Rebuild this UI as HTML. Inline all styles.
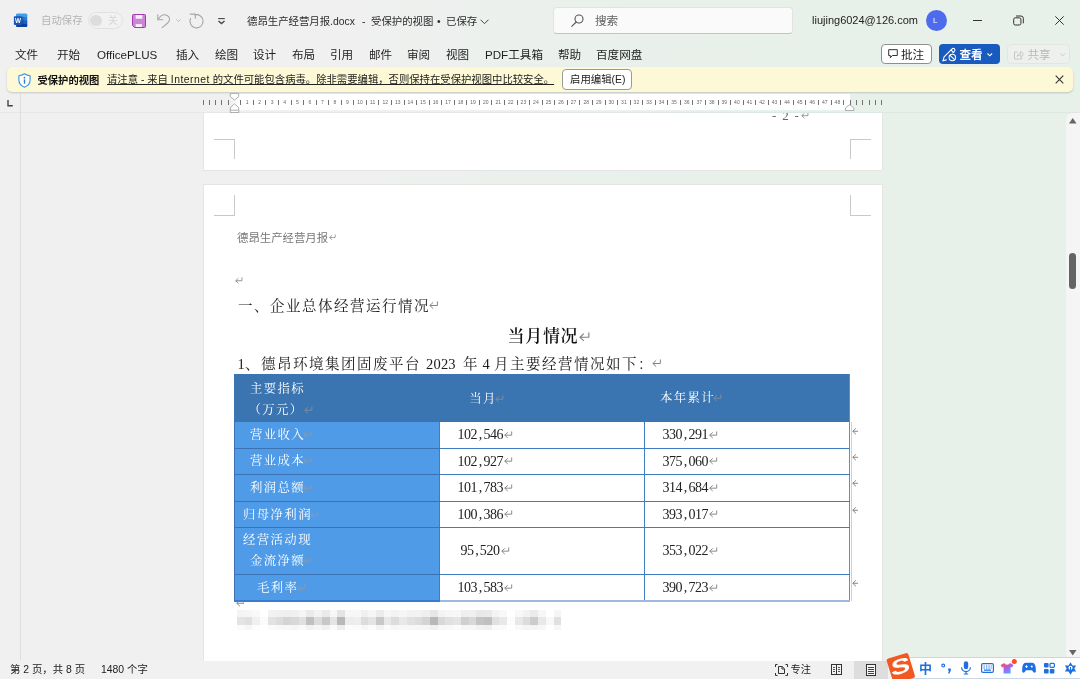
<!DOCTYPE html>
<html lang="zh-CN">
<head>
<meta charset="utf-8">
<title>德昂生产经营月报.docx</title>
<style>
*{box-sizing:border-box;margin:0;padding:0}
html,body{width:1080px;height:679px;overflow:hidden}
body{position:relative;font-family:"Liberation Sans","Noto Sans CJK SC",sans-serif;color:#222;
 background:linear-gradient(90deg,#f0f0f0 0%,#f0f0f0 30%,#e9f0eb 60%,#e8f0ea 100%);}
#root{position:absolute;left:0;top:0;width:1080px;height:679px;overflow:hidden;will-change:transform}
.abs{position:absolute}
.t{position:absolute;white-space:nowrap;line-height:1}
svg{position:absolute;overflow:visible}
/* ---------- title bar ---------- */
#titlebar{left:0;top:0;width:1080px;height:40px}
.ttl{font-size:10.4px;color:#2b2b2b;top:17px}
/* ---------- menu ---------- */
.mi{font-size:11.6px;color:#1f1f1f;top:49px}
/* ---------- message bar ---------- */
#msg{left:7px;top:67px;width:1066px;height:25px;background:#fdf8d6;border-radius:5px;box-shadow:0 1px 2px rgba(0,0,0,.18)}
/* ---------- ruler ---------- */
#rulerwhite{left:231px;top:94.3px;width:618.500px;height:16px;background:linear-gradient(90deg,rgba(255,255,255,0) 0,#fff 8px)}
/* ---------- doc ---------- */
#docarea{left:0;top:113px;width:1066px;height:548px;overflow:hidden}
#docin{left:0;top:-1px;width:1066px;height:549px}
.page{position:absolute;left:202.500px;width:680px;background:#fff;border:1px solid #e4e4e4}
.serif{font-family:"Liberation Serif","Noto Serif CJK SC",serif}
.ret{color:#8a8a8a;font-family:"DejaVu Sans",sans-serif}
/* table */
.cell{position:absolute}
.lab{color:#fff;font-size:12.4px;letter-spacing:1.4px;font-weight:400;margin-top:1.500px}
.num{color:#222;font-size:14px;letter-spacing:-.45px}
.num i{font-style:normal;padding:0 1.6px}
.l1{font-size:14.5px;letter-spacing:1.500px;color:#1c1c1c;font-weight:400;margin-top:1.200px}
.dg{letter-spacing:0.2px}
svg.r{position:static;display:inline-block;width:.62em;height:.55em;fill:none;stroke:#808080;stroke-width:1.100;vertical-align:0.02em;margin-left:.5px;letter-spacing:0}
.lab svg.r{width:8.400px;height:7.500px;margin-left:-1.800px}
.num svg.r{width:8.200px;height:7.400px;margin-left:1.300px;vertical-align:1px}
.l1 svg.r{margin-left:-1px;vertical-align:2px}
svg.rh{stroke:#7d8b9f;stroke-width:1.2}
svg.rl{stroke:#8c98a8;stroke-width:1.2}
/* status bar */
#status{left:0;top:661px;width:1080px;height:18px;background:#f1f1f1}
</style>
</head>
<body>
<div id="root">

<!-- ================= TITLE BAR ================= -->
<div id="titlebar" class="abs">
  <!-- word icon -->
  <svg style="left:13px;top:13px" width="16" height="16" viewBox="0 0 16 16">
    <rect x="3.200" y="0.700" width="11" height="13.300" rx="1" fill="#2b7cd3"/>
    <path d="M3.200 1.700a1 1 0 0 1 1-1h9a1 1 0 0 1 1 1v2.300h-11z" fill="#3fa0ea"/>
    <rect x="3.200" y="7.500" width="11" height="3.500" fill="#1a5fc2"/>
    <path d="M3.200 11h11v2a1 1 0 0 1-1 1h-9a1 1 0 0 1-1-1z" fill="#0f3f99"/>
    <rect x="9.200" y="3.600" width="1.200" height="9" fill="#0b2f78" opacity=".35"/>
    <rect x="0.900" y="3.200" width="8.300" height="8.700" rx="1" fill="#1756b8"/>
    <text x="5.050" y="10" font-size="6.300" font-weight="bold" fill="#fff" text-anchor="middle" font-family="Liberation Sans, sans-serif">W</text>
  </svg>
  <div class="t" style="left:41px;top:16px;font-size:10.4px;color:#b4b4b4">自动保存</div>
  <div class="abs" style="left:88px;top:12px;width:35px;height:17px;border:1px solid #e0e0e0;border-radius:9px;background:#f2f2f2"></div>
  <div class="abs" style="left:90.300px;top:14.800px;width:11.400px;height:11.200px;border-radius:50%;background:#dddddd"></div>
  <div class="t" style="left:108px;top:16px;font-size:10px;color:#d6d6d6">关</div>
  <!-- save -->
  <svg style="left:132px;top:14px" width="14" height="14" viewBox="0 0 14 14">
    <path d="M1.5 0.5h11a1 1 0 0 1 1 1v11a1 1 0 0 1-1 1H2.6L0.500 11.400V1.500a1 1 0 0 1 1-1z" fill="#cc86d6" stroke="#a338ad" stroke-width="1"/>
    <rect x="3.700" y="1" width="6.600" height="3.700" fill="#fbf3fc"/>
    <rect x="3.700" y="10.100" width="6.200" height="2.900" fill="#fbf3fc"/>
  </svg>
  <!-- undo -->
  <svg style="left:156px;top:13px" width="16" height="16" viewBox="0 0 16 16" fill="none" stroke="#a6a6a6" stroke-width="1.100" stroke-linecap="round" stroke-linejoin="round">
    <path d="M1.800 1.700v5h5"/><path d="M2.200 6.300C4.500 2.500 8 0.800 11.200 2.500c3.200 1.800 3 5.200 0.500 7.500L6.200 14.600"/>
  </svg>
  <svg style="left:176px;top:19px" width="5" height="3" viewBox="0 0 5 3" fill="none" stroke="#b8b8b8" stroke-width="0.900"><path d="M0.300 0.300l2.200 2.200l2.200-2.200"/></svg>
  <!-- redo -->
  <svg style="left:189px;top:13px" width="16" height="16" viewBox="0 0 16 16" fill="none" stroke="#a6a6a6" stroke-width="1.100" stroke-linecap="round" stroke-linejoin="round">
    <path d="M1.200 1.100h5.100v4.200"/><path d="M5.800 1.900A6.600 6.600 0 1 1 1.500 5.500"/>
  </svg>
  <!-- customize -->
  <svg style="left:218px;top:18px" width="7" height="6" viewBox="0 0 7 6" fill="none" stroke="#444" stroke-width="1.100"><path d="M0.200 0.600h6.600"/><path d="M0.500 2.900l3 2.700l3-2.700" stroke-width="1.300"/></svg>

  <div class="t ttl" style="left:247px">德昂生产经营月报.docx</div>
  <div class="t ttl" style="left:362px">-</div>
  <div class="t ttl" style="left:371px">受保护的视图</div>
  <div class="t ttl" style="left:437px">•</div>
  <div class="t ttl" style="left:446px">已保存</div>
  <svg style="left:480px;top:19px" width="9" height="6" viewBox="0 0 9 6" fill="none" stroke="#444" stroke-width="1"><path d="M0.5 0.7l4 4l4-4"/></svg>

  <!-- search -->
  <div class="abs" style="left:553px;top:7px;width:240px;height:27px;background:#fafafa;border:1px solid #e2e2e2;border-bottom-color:#c4c4c4;border-radius:4px"></div>
  <svg style="left:571px;top:14px" width="13" height="13" viewBox="0 0 13 13" fill="none" stroke="#555" stroke-width="1.1" stroke-linecap="round"><circle cx="8" cy="5" r="4"/><path d="M5.2 8L0.8 12.4"/></svg>
  <div class="t" style="left:595px;top:15px;font-size:11.6px;color:#616161">搜索</div>

  <div class="t" style="left:812px;top:15px;font-size:11px;color:#222">liujing6024@126.com</div>
  <div class="abs" style="left:926px;top:10px;width:21px;height:21px;border-radius:50%;background:#4f6bed"></div>
  <div class="t" style="left:933px;top:17px;font-size:8px;color:#fff">L</div>
  <!-- window controls -->
  <div class="abs" style="left:973px;top:20px;width:9px;height:1px;background:#333"></div>
  <svg style="left:1013px;top:15px" width="11" height="11" viewBox="0 0 11 11" fill="none" stroke="#333" stroke-width="1"><rect x="0.7" y="2.8" width="7.2" height="7.2" rx="1.5"/><path d="M3 1h5a2.3 2.3 0 0 1 2.3 2.3v5"/></svg>
  <svg style="left:1055px;top:16px" width="9" height="9" viewBox="0 0 9 9" fill="none" stroke="#333" stroke-width="1"><path d="M0.3 0.3l8.4 8.4M8.7 0.3l-8.4 8.4"/></svg>
</div>

<!-- ================= MENU ================= -->
<div class="t mi" style="left:15px">文件</div>
<div class="t mi" style="left:57px">开始</div>
<div class="t mi" style="left:97px">OfficePLUS</div>
<div class="t mi" style="left:176px">插入</div>
<div class="t mi" style="left:215px">绘图</div>
<div class="t mi" style="left:253px">设计</div>
<div class="t mi" style="left:292px">布局</div>
<div class="t mi" style="left:330px">引用</div>
<div class="t mi" style="left:369px">邮件</div>
<div class="t mi" style="left:407px">审阅</div>
<div class="t mi" style="left:446px">视图</div>
<div class="t mi" style="left:485px">PDF工具箱</div>
<div class="t mi" style="left:558px">帮助</div>
<div class="t mi" style="left:596px">百度网盘</div>

<!-- comment / view / share buttons -->
<div class="abs" style="left:881px;top:44px;width:51px;height:20px;background:#fff;border:1px solid #8f8f8f;border-radius:4px"></div>
<svg style="left:887.500px;top:49px" width="10" height="10" viewBox="0 0 10 10" fill="none" stroke="#333" stroke-width="1" stroke-linejoin="round"><path d="M0.700 0.700h8.600v5.800h-5l-2 2.300v-2.300h-1.600z"/></svg>
<div class="t" style="left:901px;top:49px;font-size:11.6px;color:#222">批注</div>

<div class="abs" style="left:939px;top:44px;width:61px;height:20px;background:#185abd;border-radius:4px"></div>
<svg style="left:942px;top:46.500px" width="15" height="15" viewBox="0 0 15 15" fill="none" stroke="#fff" stroke-width="1.100" stroke-linecap="round" stroke-linejoin="round"><path d="M1 13.800l1.100-3.900l8-8a1.700 1.700 0 0 1 2.400 2.400l-1.600 1.600"/><path d="M1 13.800l3.300-.9"/><path d="M9 3l2.400 2.400"/><circle cx="10.300" cy="10.500" r="3.200"/><path d="M8.100 8.300l4.400 4.400"/></svg>
<div class="t" style="left:959.500px;top:49px;font-size:11.6px;color:#fff;font-weight:700">查看</div>
<svg style="left:986.500px;top:53px" width="5.600" height="4" viewBox="0 0 5.600 4" fill="none" stroke="#fff" stroke-width="1.100"><path d="M0.500 0.500l2.300 2.300l2.300-2.300"/></svg>

<div class="abs" style="left:1007px;top:44px;width:63px;height:20px;background:#eef0ee;border:1px solid #e3e5e3;border-radius:4px"></div>
<svg style="left:1014px;top:49.500px" width="10" height="9.500" viewBox="0 0 10 9.500" fill="none" stroke="#c6c6c6" stroke-width="1" stroke-linejoin="round"><path d="M3.500 2h-3v7h7.300v-2.300"/><path d="M3.200 6.500c.4-2.200 1.800-3.300 3.600-3.300v-2l2.700 2.900l-2.700 2.900v-2c-1.500 0-2.700.400-3.600 1.500z"/></svg>
<div class="t" style="left:1027.500px;top:49px;font-size:11.6px;color:#b9b9b9">共享</div>
<svg style="left:1060px;top:53px" width="5.600" height="4" viewBox="0 0 5.600 4" fill="none" stroke="#c9c9c9" stroke-width="1"><path d="M0.500 0.500l2.300 2.300l2.300-2.300"/></svg>

<!-- ================= MESSAGE BAR ================= -->
<div id="msg" class="abs"></div>
<svg style="left:18px;top:73px" width="13" height="15" viewBox="0 0 13 15"><path d="M6.5 0.8c1.8 1.2 3.6 1.8 5.6 1.9v4.5c0 3.3-2.2 5.6-5.6 7c-3.4-1.4-5.6-3.7-5.6-7V2.7c2-.1 3.800-.7 5.6-1.900z" fill="#fff" stroke="#3a96dd" stroke-width="1.100"/><circle cx="6.500" cy="4.700" r="0.900" fill="#2b7cd3"/><rect x="5.800" y="6.400" width="1.400" height="4.300" fill="#2b7cd3"/></svg>
<div class="t" style="left:37.500px;top:76px;font-size:10.3px;font-weight:bold;color:#111">受保护的视图</div>
<div class="t" style="left:107px;top:75px;font-size:10.35px;color:#222;text-decoration:underline;text-underline-offset:1px">请注意 - 来自 <span style="letter-spacing:.5px">Internet</span> 的文件可能包含病毒。除非需要编辑，否则保持在受保护视图中比较安全。</div>
<div class="abs" style="left:562px;top:69px;width:70px;height:21px;background:#fff;border:1px solid #9a9a9a;border-radius:4px"></div>
<div class="t" style="left:570px;top:75px;font-size:10.4px;color:#222">启用编辑(E)</div>
<svg style="left:1055px;top:75px" width="9" height="9" viewBox="0 0 9 9" fill="none" stroke="#333" stroke-width="1.100"><path d="M0.700 0.700l7.600 7.600M8.300 0.700l-7.600 7.600"/></svg>

<!-- ================= RULER ================= -->
<div id="rulerwhite" class="abs"></div>
<svg id="ruler" style="left:0;top:94px" width="1080" height="18" viewBox="0 0 1080 18">
<path d="M228.5 6v5M221.5 6v5M215.5 6v5M209.5 6v5M203.5 6v5M240.5 6v5M253.5 6v5M265.5 6v5M278.5 6v5M291.5 6v5M303.5 6v5M316.5 6v5M328.5 6v5M341.5 6v5M353.5 6v5M366.5 6v5M378.5 6v5M391.5 6v5M404.5 6v5M416.5 6v5M429.5 6v5M441.5 6v5M454.5 6v5M466.5 6v5M479.5 6v5M491.5 6v5M504.5 6v5M517.5 6v5M529.5 6v5M542.5 6v5M554.5 6v5M567.5 6v5M579.5 6v5M592.5 6v5M605.5 6v5M617.5 6v5M630.5 6v5M642.5 6v5M655.5 6v5M667.5 6v5M680.5 6v5M692.5 6v5M705.5 6v5M718.5 6v5M730.5 6v5M743.5 6v5M755.5 6v5M768.5 6v5M780.5 6v5M793.5 6v5M805.5 6v5M818.5 6v5M831.5 6v5M843.5 6v5M850.5 6v5M856.5 6v5M862.5 6v5M869.5 6v5M875.5 6v5M881.5 6v5" stroke="#727272" stroke-width="1" fill="none"/>
<g font-family="Liberation Sans, sans-serif" font-size="5" fill="#686868" text-anchor="middle">
<text x="247.1" y="10.300">1</text>
<text x="259.6" y="10.300">2</text>
<text x="272.2" y="10.300">3</text>
<text x="284.7" y="10.300">4</text>
<text x="297.3" y="10.300">5</text>
<text x="309.9" y="10.300">6</text>
<text x="322.4" y="10.300">7</text>
<text x="335.0" y="10.300">8</text>
<text x="347.5" y="10.300">9</text>
<text x="360.1" y="10.300">10</text>
<text x="372.7" y="10.300">11</text>
<text x="385.2" y="10.300">12</text>
<text x="397.8" y="10.300">13</text>
<text x="410.3" y="10.300">14</text>
<text x="422.9" y="10.300">15</text>
<text x="435.5" y="10.300">16</text>
<text x="448.0" y="10.300">17</text>
<text x="460.6" y="10.300">18</text>
<text x="473.1" y="10.300">19</text>
<text x="485.7" y="10.300">20</text>
<text x="498.3" y="10.300">21</text>
<text x="510.8" y="10.300">22</text>
<text x="523.4" y="10.300">23</text>
<text x="535.9" y="10.300">24</text>
<text x="548.5" y="10.300">25</text>
<text x="561.1" y="10.300">26</text>
<text x="573.6" y="10.300">27</text>
<text x="586.2" y="10.300">28</text>
<text x="598.7" y="10.300">29</text>
<text x="611.3" y="10.300">30</text>
<text x="623.9" y="10.300">31</text>
<text x="636.4" y="10.300">32</text>
<text x="649.0" y="10.300">33</text>
<text x="661.5" y="10.300">34</text>
<text x="674.1" y="10.300">35</text>
<text x="686.7" y="10.300">36</text>
<text x="699.2" y="10.300">37</text>
<text x="711.8" y="10.300">38</text>
<text x="724.3" y="10.300">39</text>
<text x="736.9" y="10.300">40</text>
<text x="749.5" y="10.300">41</text>
<text x="762.0" y="10.300">42</text>
<text x="774.6" y="10.300">43</text>
<text x="787.1" y="10.300">44</text>
<text x="799.7" y="10.300">45</text>
<text x="812.3" y="10.300">46</text>
<text x="824.8" y="10.300">47</text>
<text x="837.4" y="10.300">48</text>
</g>
<path d="M230.300 -0.600h8.400v3.100l-4.200 3.600l-4.200-3.600z" fill="#fff" stroke="#9a9a9a" stroke-width="0.8"/>
<path d="M230.300 18.600v-5l4.200-3.800l4.200 3.800v5z" fill="#fff" stroke="#9a9a9a" stroke-width="0.8"/>
<path d="M230.300 16.200h8.400" stroke="#9a9a9a" stroke-width="0.8"/>
<path d="M845.500 16.500v-2.500l4.200-3.300l4.200 3.300v2.500z" fill="#fff" stroke="#9a9a9a" stroke-width="0.8"/>
</svg>
<svg style="left:6.500px;top:99.500px" width="6" height="7" viewBox="0 0 6 7" fill="none" stroke="#444" stroke-width="1.400"><path d="M1 0v5.800h4.800"/></svg>

<div class="abs" style="left:20px;top:93px;width:1px;height:567px;background:#dedede"></div>
<div class="abs" style="left:0;top:112px;width:1080px;height:1px;background:rgba(0,0,0,.035)"></div>
<!-- ================= DOCUMENT AREA ================= -->
<div id="docarea" class="abs"><div id="docin" class="abs">
  
  

  <!-- page 1 (bottom part) -->
  <div class="page" style="top:-20px;height:78.500px"></div>
  <div class="t serif" style="left:772px;top:-3px;font-size:13px;color:#666;letter-spacing:1.300px">- 2 -<svg class="r" style="margin-left:1px;width:7.500px;height:6.500px;vertical-align:1.500px" viewBox="0 0 10 9"><path d="M9.400 0.500v4.600H0.900M4.600 1.600L0.900 5.100L4.600 8.600"/></svg></div>
  <div class="abs" style="left:214px;top:27px;width:21px;height:1px;background:#c9c9c9"></div>
  <div class="abs" style="left:234px;top:27px;width:1px;height:20px;background:#c9c9c9"></div>
  <div class="abs" style="left:850px;top:27px;width:21px;height:1px;background:#c9c9c9"></div>
  <div class="abs" style="left:850px;top:27px;width:1px;height:20px;background:#c9c9c9"></div>

  <!-- page 2 -->
  <div class="page" style="top:71.500px;height:520px"></div>
  <div class="abs" style="left:214px;top:103px;width:21px;height:1px;background:#c9c9c9"></div>
  <div class="abs" style="left:234px;top:83px;width:1px;height:20px;background:#c9c9c9"></div>
  <div class="abs" style="left:850px;top:103px;width:21px;height:1px;background:#c9c9c9"></div>
  <div class="abs" style="left:850px;top:83px;width:1px;height:20px;background:#c9c9c9"></div>

  <div class="t" style="left:237px;top:120.500px;font-size:11.4px;color:#787878">德昂生产经营月报<svg class="r" style="width:6.600px;height:6.200px;vertical-align:1px;margin-left:.800px" viewBox="0 0 10 9"><path d="M9.400 0.500v4.600H0.900M4.600 1.600L0.900 5.100L4.600 8.600"/></svg></div>
  <div class="t" style="left:234px;top:162px;font-size:12px"><svg class="r" viewBox="0 0 10 9"><path d="M9.400 0.500v4.600H0.900M4.600 1.600L0.900 5.100L4.600 8.600"/></svg></div>
  <div class="t serif l1" style="left:238px;top:186px">一、企业总体经营运行情况<svg class="r" viewBox="0 0 10 9"><path d="M9.400 0.500v4.600H0.900M4.600 1.600L0.900 5.100L4.600 8.600"/></svg></div>
  <div class="t serif" style="left:507.500px;top:216px;font-size:17px;letter-spacing:.7px;color:#111;font-weight:600">当月情况<svg class="r" style="margin-left:1px" viewBox="0 0 10 9"><path d="M9.400 0.500v4.600H0.900M4.600 1.600L0.900 5.100L4.600 8.600"/></svg></div>
  <div class="t serif l1" style="left:237.500px;top:244px"><span class="dg">1</span>、德昂环境集团固废平台</div>
  <div class="t serif l1 dg" style="left:426px;top:244px">2023</div>
  <div class="t serif l1" style="left:463px;top:244px">年</div>
  <div class="t serif l1 dg" style="left:482.500px;top:244px">4</div>
  <div class="t serif l1" style="left:494px;top:244px">月主要经营情况如下：<svg class="r" style="margin-left:-2px" viewBox="0 0 10 9"><path d="M9.400 0.500v4.600H0.900M4.600 1.600L0.900 5.100L4.600 8.600"/></svg></div>

  <!-- table -->
  <div id="tbl" class="abs serif" style="left:234px;top:262px;width:616px;height:227px">
    <div class="cell" style="left:0;top:0;width:616px;height:48px;background:#3b75b1"></div>
    <div class="cell" style="left:0;top:48px;width:206px;height:179px;background:#4f9be8"></div>
    <div class="cell" style="left:206px;top:48px;width:410px;height:179px;background:#fff"></div>
    <div class="cell" style="left:0;top:0;width:1px;height:227px;background:#3b75b1"></div>
    <div class="cell" style="left:205px;top:48px;width:1px;height:179px;background:#3f7cc0"></div>
    <div class="cell" style="left:410px;top:48px;width:1px;height:179px;background:#3f7cc0"></div>
    <div class="cell" style="left:615px;top:0;width:1px;height:227px;background:#5b8fcc"></div>
    <div class="cell" style="left:616.500px;top:48px;width:1px;height:179px;background:#c3d4ea"></div>
    <div class="cell" style="left:0;top:74px;width:206px;height:1px;background:#3a72b4"></div>
    <div class="cell" style="left:206px;top:74px;width:410px;height:1px;background:#3f7cc0"></div>
    <div class="cell" style="left:0;top:100px;width:206px;height:1px;background:#3a72b4"></div>
    <div class="cell" style="left:206px;top:100px;width:410px;height:1px;background:#3f7cc0"></div>
    <div class="cell" style="left:0;top:127px;width:206px;height:1px;background:#3a72b4"></div>
    <div class="cell" style="left:206px;top:127px;width:410px;height:1px;background:#3f7cc0"></div>
    <div class="cell" style="left:0;top:153px;width:206px;height:1px;background:#3a72b4"></div>
    <div class="cell" style="left:206px;top:153px;width:410px;height:1px;background:#3f7cc0"></div>
    <div class="cell" style="left:0;top:200px;width:206px;height:1px;background:#3a72b4"></div>
    <div class="cell" style="left:206px;top:200px;width:410px;height:1px;background:#3f7cc0"></div>
    <div class="cell" style="left:0;top:226px;width:206px;height:1.500px;background:#3a7bd0"></div>
    <div class="cell" style="left:206px;top:226px;width:410px;height:1.500px;background:#9db9de"></div>
    <div class="t lab" style="left:16px;top:7.5px">主要指标</div>
    <div class="t lab" style="left:14.5px;top:28px">（万元）<svg class="r rh" style="margin-left:0" viewBox="0 0 10 9"><path d="M9.400 0.500v4.600H0.900M4.600 1.600L0.900 5.100L4.600 8.600"/></svg></div>
    <div class="t lab" style="left:235.3px;top:17.5px">当月<svg class="r rh" viewBox="0 0 10 9"><path d="M9.400 0.500v4.600H0.900M4.600 1.600L0.900 5.100L4.600 8.600"/></svg></div>
    <div class="t lab" style="left:426px;top:16.5px">本年累计<svg class="r rh" viewBox="0 0 10 9"><path d="M9.400 0.500v4.600H0.900M4.600 1.600L0.900 5.100L4.600 8.600"/></svg></div>
    <div class="t lab" style="left:16px;top:53px">营业收入<svg class="r rl" viewBox="0 0 10 9"><path d="M9.400 0.500v4.600H0.900M4.600 1.600L0.900 5.100L4.600 8.600"/></svg></div>
    <div class="t lab" style="left:16px;top:79.5px">营业成本<svg class="r rl" viewBox="0 0 10 9"><path d="M9.400 0.500v4.600H0.900M4.600 1.600L0.900 5.100L4.600 8.600"/></svg></div>
    <div class="t lab" style="left:16px;top:106px">利润总额<svg class="r rl" viewBox="0 0 10 9"><path d="M9.400 0.500v4.600H0.900M4.600 1.600L0.900 5.100L4.600 8.600"/></svg></div>
    <div class="t lab" style="left:9px;top:133px">归母净利润<svg class="r rl" viewBox="0 0 10 9"><path d="M9.400 0.500v4.600H0.900M4.600 1.600L0.900 5.100L4.600 8.600"/></svg></div>
    <div class="t lab" style="left:9px;top:158.5px">经营活动现</div>
    <div class="t lab" style="left:16px;top:179.5px">金流净额<svg class="r rl" viewBox="0 0 10 9"><path d="M9.400 0.500v4.600H0.900M4.600 1.600L0.900 5.100L4.600 8.600"/></svg></div>
    <div class="t lab" style="left:23px;top:206.5px">毛利率<svg class="r rl" viewBox="0 0 10 9"><path d="M9.400 0.500v4.600H0.900M4.600 1.600L0.900 5.100L4.600 8.600"/></svg></div>
    <div class="t num" style="left:223.5px;top:54px">102<i>,</i>546<svg class="r" viewBox="0 0 10 9"><path d="M9.400 0.500v4.600H0.900M4.600 1.600L0.900 5.100L4.600 8.600"/></svg></div>
    <div class="t num" style="left:428.5px;top:54px">330<i>,</i>291<svg class="r" viewBox="0 0 10 9"><path d="M9.400 0.500v4.600H0.900M4.600 1.600L0.900 5.100L4.600 8.600"/></svg></div>
    <div class="t num" style="left:223.5px;top:80.5px">102<i>,</i>927<svg class="r" viewBox="0 0 10 9"><path d="M9.400 0.500v4.600H0.900M4.600 1.600L0.900 5.100L4.600 8.600"/></svg></div>
    <div class="t num" style="left:428.5px;top:80.5px">375<i>,</i>060<svg class="r" viewBox="0 0 10 9"><path d="M9.400 0.500v4.600H0.900M4.600 1.600L0.900 5.100L4.600 8.600"/></svg></div>
    <div class="t num" style="left:223.5px;top:107px">101<i>,</i>783<svg class="r" viewBox="0 0 10 9"><path d="M9.400 0.500v4.600H0.900M4.600 1.600L0.900 5.100L4.600 8.600"/></svg></div>
    <div class="t num" style="left:428.5px;top:107px">314<i>,</i>684<svg class="r" viewBox="0 0 10 9"><path d="M9.400 0.500v4.600H0.900M4.600 1.600L0.900 5.100L4.600 8.600"/></svg></div>
    <div class="t num" style="left:223.5px;top:133.5px">100<i>,</i>386<svg class="r" viewBox="0 0 10 9"><path d="M9.400 0.500v4.600H0.900M4.600 1.600L0.900 5.100L4.600 8.600"/></svg></div>
    <div class="t num" style="left:428.5px;top:133.5px">393<i>,</i>017<svg class="r" viewBox="0 0 10 9"><path d="M9.400 0.500v4.600H0.900M4.600 1.600L0.900 5.100L4.600 8.600"/></svg></div>
    <div class="t num" style="left:226.5px;top:170px">95<i>,</i>520<svg class="r" viewBox="0 0 10 9"><path d="M9.400 0.500v4.600H0.900M4.600 1.600L0.900 5.100L4.600 8.600"/></svg></div>
    <div class="t num" style="left:428.5px;top:170px">353<i>,</i>022<svg class="r" viewBox="0 0 10 9"><path d="M9.400 0.500v4.600H0.900M4.600 1.600L0.900 5.100L4.600 8.600"/></svg></div>
    <div class="t num" style="left:223.5px;top:207px">103<i>,</i>583<svg class="r" viewBox="0 0 10 9"><path d="M9.400 0.500v4.600H0.900M4.600 1.600L0.900 5.100L4.600 8.600"/></svg></div>
    <div class="t num" style="left:428.5px;top:207px">390<i>,</i>723<svg class="r" viewBox="0 0 10 9"><path d="M9.400 0.500v4.600H0.900M4.600 1.600L0.900 5.100L4.600 8.600"/></svg></div>
  </div>
  <!-- row end marks -->
  <div class="abs" style="left:851px;top:314.5px;width:7px;height:8px;overflow:hidden"><svg class="r" style="position:absolute;left:0;top:0;width:8.500px;height:7.600px" viewBox="0 0 10 9"><path d="M9.400 0.500v4.600H0.900M4.600 1.600L0.900 5.100L4.600 8.600"/></svg></div>
  <div class="abs" style="left:851px;top:340.5px;width:7px;height:8px;overflow:hidden"><svg class="r" style="position:absolute;left:0;top:0;width:8.500px;height:7.600px" viewBox="0 0 10 9"><path d="M9.400 0.500v4.600H0.900M4.600 1.600L0.900 5.100L4.600 8.600"/></svg></div>
  <div class="abs" style="left:851px;top:367px;width:7px;height:8px;overflow:hidden"><svg class="r" style="position:absolute;left:0;top:0;width:8.500px;height:7.600px" viewBox="0 0 10 9"><path d="M9.400 0.500v4.600H0.900M4.600 1.600L0.900 5.100L4.600 8.600"/></svg></div>
  <div class="abs" style="left:851px;top:393.5px;width:7px;height:8px;overflow:hidden"><svg class="r" style="position:absolute;left:0;top:0;width:8.500px;height:7.600px" viewBox="0 0 10 9"><path d="M9.400 0.500v4.600H0.900M4.600 1.600L0.900 5.100L4.600 8.600"/></svg></div>
  <div class="abs" style="left:851px;top:466.5px;width:7px;height:8px;overflow:hidden"><svg class="r" style="position:absolute;left:0;top:0;width:8.500px;height:7.600px" viewBox="0 0 10 9"><path d="M9.400 0.500v4.600H0.900M4.600 1.600L0.900 5.100L4.600 8.600"/></svg></div>
  <div class="abs" style="left:235px;top:489px;width:9px;height:6px;overflow:hidden"><svg class="r" style="position:absolute;left:0;top:-2px;width:8.500px;height:7.600px" viewBox="0 0 10 9"><path d="M9.400 0.500v4.600H0.900M4.600 1.600L0.900 5.100L4.600 8.600"/></svg></div>

  <!-- blurred line -->
  <svg style="left:237px;top:497.7px" width="326" height="21" viewBox="0 0 326 21" shape-rendering="crispEdges"><rect x="0.00" y="0" width="7.77" height="7.400" fill="#f4f4f4"/><rect x="0.00" y="7.300" width="7.77" height="7.900" fill="#e4e4e4"/><rect x="0.00" y="15.100" width="7.77" height="5" fill="#fbfbfb"/><rect x="7.72" y="0" width="7.77" height="7.400" fill="#f6f6f6"/><rect x="7.72" y="7.300" width="7.77" height="7.900" fill="#e0e0e0"/><rect x="7.72" y="15.100" width="7.77" height="5" fill="#f7f7f7"/><rect x="15.44" y="0" width="7.77" height="7.400" fill="#f9f9f9"/><rect x="15.44" y="7.300" width="7.77" height="7.900" fill="#f0f0f0"/><rect x="15.44" y="15.100" width="7.77" height="5" fill="#fdfdfd"/><rect x="23.16" y="0" width="7.77" height="7.400" fill="#ffffff"/><rect x="23.16" y="7.300" width="7.77" height="7.900" fill="#fbfbfb"/><rect x="23.16" y="15.100" width="7.77" height="5" fill="#ffffff"/><rect x="30.88" y="0" width="7.77" height="7.400" fill="#f2f2f2"/><rect x="30.88" y="7.300" width="7.77" height="7.900" fill="#e2e2e2"/><rect x="30.88" y="15.100" width="7.77" height="5" fill="#fafafa"/><rect x="38.60" y="0" width="7.77" height="7.400" fill="#f0f0f0"/><rect x="38.60" y="7.300" width="7.77" height="7.900" fill="#dcdcdc"/><rect x="38.60" y="15.100" width="7.77" height="5" fill="#f8f8f8"/><rect x="46.32" y="0" width="7.77" height="7.400" fill="#efefef"/><rect x="46.32" y="7.300" width="7.77" height="7.900" fill="#d4d4d4"/><rect x="46.32" y="15.100" width="7.77" height="5" fill="#f7f7f7"/><rect x="54.04" y="0" width="7.77" height="7.400" fill="#f0f0f0"/><rect x="54.04" y="7.300" width="7.77" height="7.900" fill="#d8d8d8"/><rect x="54.04" y="15.100" width="7.77" height="5" fill="#f5f5f5"/><rect x="61.76" y="0" width="7.77" height="7.400" fill="#f5f5f5"/><rect x="61.76" y="7.300" width="7.77" height="7.900" fill="#e0e0e0"/><rect x="61.76" y="15.100" width="7.77" height="5" fill="#fafafa"/><rect x="69.48" y="0" width="7.77" height="7.400" fill="#eaeaea"/><rect x="69.48" y="7.300" width="7.77" height="7.900" fill="#c0c0c0"/><rect x="69.48" y="15.100" width="7.77" height="5" fill="#f2f2f2"/><rect x="77.20" y="0" width="7.77" height="7.400" fill="#f3f3f3"/><rect x="77.20" y="7.300" width="7.77" height="7.900" fill="#dcdcdc"/><rect x="77.20" y="15.100" width="7.77" height="5" fill="#f6f6f6"/><rect x="84.92" y="0" width="7.77" height="7.400" fill="#eaeaea"/><rect x="84.92" y="7.300" width="7.77" height="7.900" fill="#c8c8c8"/><rect x="84.92" y="15.100" width="7.77" height="5" fill="#f1f1f1"/><rect x="92.64" y="0" width="7.77" height="7.400" fill="#f7f7f7"/><rect x="92.64" y="7.300" width="7.77" height="7.900" fill="#e4e4e4"/><rect x="92.64" y="15.100" width="7.77" height="5" fill="#fafafa"/><rect x="100.36" y="0" width="7.77" height="7.400" fill="#e4e4e4"/><rect x="100.36" y="7.300" width="7.77" height="7.900" fill="#b8b8b8"/><rect x="100.36" y="15.100" width="7.77" height="5" fill="#ededed"/><rect x="108.08" y="0" width="7.77" height="7.400" fill="#f7f7f7"/><rect x="108.08" y="7.300" width="7.77" height="7.900" fill="#ececec"/><rect x="108.08" y="15.100" width="7.77" height="5" fill="#fcfcfc"/><rect x="115.80" y="0" width="7.77" height="7.400" fill="#f7f7f7"/><rect x="115.80" y="7.300" width="7.77" height="7.900" fill="#eeeeee"/><rect x="115.80" y="15.100" width="7.77" height="5" fill="#fbfbfb"/><rect x="123.52" y="0" width="7.77" height="7.400" fill="#f0f0f0"/><rect x="123.52" y="7.300" width="7.77" height="7.900" fill="#dcdcdc"/><rect x="123.52" y="15.100" width="7.77" height="5" fill="#f7f7f7"/><rect x="131.24" y="0" width="7.77" height="7.400" fill="#f6f6f6"/><rect x="131.24" y="7.300" width="7.77" height="7.900" fill="#e4e4e4"/><rect x="131.24" y="15.100" width="7.77" height="5" fill="#fbfbfb"/><rect x="138.96" y="0" width="7.77" height="7.400" fill="#ececec"/><rect x="138.96" y="7.300" width="7.77" height="7.900" fill="#c8c8c8"/><rect x="138.96" y="15.100" width="7.77" height="5" fill="#f3f3f3"/><rect x="146.68" y="0" width="7.77" height="7.400" fill="#f7f7f7"/><rect x="146.68" y="7.300" width="7.77" height="7.900" fill="#e8e8e8"/><rect x="146.68" y="15.100" width="7.77" height="5" fill="#fbfbfb"/><rect x="154.40" y="0" width="7.77" height="7.400" fill="#f3f3f3"/><rect x="154.40" y="7.300" width="7.77" height="7.900" fill="#dcdcdc"/><rect x="154.40" y="15.100" width="7.77" height="5" fill="#f6f6f6"/><rect x="162.12" y="0" width="7.77" height="7.400" fill="#f6f6f6"/><rect x="162.12" y="7.300" width="7.77" height="7.900" fill="#e8e8e8"/><rect x="162.12" y="15.100" width="7.77" height="5" fill="#f7f7f7"/><rect x="169.84" y="0" width="7.77" height="7.400" fill="#f2f2f2"/><rect x="169.84" y="7.300" width="7.77" height="7.900" fill="#e0e0e0"/><rect x="169.84" y="15.100" width="7.77" height="5" fill="#f7f7f7"/><rect x="177.56" y="0" width="7.77" height="7.400" fill="#f3f3f3"/><rect x="177.56" y="7.300" width="7.77" height="7.900" fill="#dcdcdc"/><rect x="177.56" y="15.100" width="7.77" height="5" fill="#f6f6f6"/><rect x="185.28" y="0" width="7.77" height="7.400" fill="#efefef"/><rect x="185.28" y="7.300" width="7.77" height="7.900" fill="#d4d4d4"/><rect x="185.28" y="15.100" width="7.77" height="5" fill="#f6f6f6"/><rect x="193.00" y="0" width="7.77" height="7.400" fill="#e6e6e6"/><rect x="193.00" y="7.300" width="7.77" height="7.900" fill="#b8b8b8"/><rect x="193.00" y="15.100" width="7.77" height="5" fill="#f0f0f0"/><rect x="200.72" y="0" width="7.77" height="7.400" fill="#f3f3f3"/><rect x="200.72" y="7.300" width="7.77" height="7.900" fill="#d8d8d8"/><rect x="200.72" y="15.100" width="7.77" height="5" fill="#f7f7f7"/><rect x="208.44" y="0" width="7.77" height="7.400" fill="#f6f6f6"/><rect x="208.44" y="7.300" width="7.77" height="7.900" fill="#e0e0e0"/><rect x="208.44" y="15.100" width="7.77" height="5" fill="#f8f8f8"/><rect x="216.16" y="0" width="7.77" height="7.400" fill="#f7f7f7"/><rect x="216.16" y="7.300" width="7.77" height="7.900" fill="#e4e4e4"/><rect x="216.16" y="15.100" width="7.77" height="5" fill="#fbfbfb"/><rect x="223.88" y="0" width="7.77" height="7.400" fill="#efefef"/><rect x="223.88" y="7.300" width="7.77" height="7.900" fill="#d0d0d0"/><rect x="223.88" y="15.100" width="7.77" height="5" fill="#f6f6f6"/><rect x="231.60" y="0" width="7.77" height="7.400" fill="#f0f0f0"/><rect x="231.60" y="7.300" width="7.77" height="7.900" fill="#d8d8d8"/><rect x="231.60" y="15.100" width="7.77" height="5" fill="#f6f6f6"/><rect x="239.32" y="0" width="7.77" height="7.400" fill="#e8e8e8"/><rect x="239.32" y="7.300" width="7.77" height="7.900" fill="#c4c4c4"/><rect x="239.32" y="15.100" width="7.77" height="5" fill="#f2f2f2"/><rect x="247.04" y="0" width="7.77" height="7.400" fill="#eaeaea"/><rect x="247.04" y="7.300" width="7.77" height="7.900" fill="#c0c0c0"/><rect x="247.04" y="15.100" width="7.77" height="5" fill="#f0f0f0"/><rect x="254.76" y="0" width="7.77" height="7.400" fill="#f4f4f4"/><rect x="254.76" y="7.300" width="7.77" height="7.900" fill="#e0e0e0"/><rect x="254.76" y="15.100" width="7.77" height="5" fill="#fafafa"/><rect x="262.48" y="0" width="7.77" height="7.400" fill="#f8f8f8"/><rect x="262.48" y="7.300" width="7.77" height="7.900" fill="#e8e8e8"/><rect x="262.48" y="15.100" width="7.77" height="5" fill="#fbfbfb"/><rect x="270.20" y="0" width="7.77" height="7.400" fill="#ffffff"/><rect x="270.20" y="7.300" width="7.77" height="7.900" fill="#fcfcfc"/><rect x="270.20" y="15.100" width="7.77" height="5" fill="#ffffff"/><rect x="277.92" y="0" width="7.77" height="7.400" fill="#f8f8f8"/><rect x="277.92" y="7.300" width="7.77" height="7.900" fill="#e8e8e8"/><rect x="277.92" y="15.100" width="7.77" height="5" fill="#f9f9f9"/><rect x="285.64" y="0" width="7.77" height="7.400" fill="#f2f2f2"/><rect x="285.64" y="7.300" width="7.77" height="7.900" fill="#dcdcdc"/><rect x="285.64" y="15.100" width="7.77" height="5" fill="#f5f5f5"/><rect x="293.36" y="0" width="7.77" height="7.400" fill="#ebebeb"/><rect x="293.36" y="7.300" width="7.77" height="7.900" fill="#cccccc"/><rect x="293.36" y="15.100" width="7.77" height="5" fill="#f4f4f4"/><rect x="301.08" y="0" width="7.77" height="7.400" fill="#f7f7f7"/><rect x="301.08" y="7.300" width="7.77" height="7.900" fill="#e8e8e8"/><rect x="301.08" y="15.100" width="7.77" height="5" fill="#f7f7f7"/><rect x="308.80" y="0" width="7.77" height="7.400" fill="#ffffff"/><rect x="308.80" y="7.300" width="7.77" height="7.900" fill="#f8f8f8"/><rect x="308.80" y="15.100" width="7.77" height="5" fill="#ffffff"/><rect x="316.52" y="0" width="7.77" height="7.400" fill="#f5f5f5"/><rect x="316.52" y="7.300" width="7.77" height="7.900" fill="#e0e0e0"/><rect x="316.52" y="15.100" width="7.77" height="5" fill="#f7f7f7"/></svg>
</div></div>

<!-- ================= SCROLLBAR ================= -->
<div class="abs" style="left:1065.500px;top:113px;width:15px;height:548px;background:#f5f5f5;border-radius:7px 0 0 7px"></div>
<svg style="left:1069px;top:117.500px" width="7.500" height="5.500" viewBox="0 0 7.500 5.500"><path d="M3.750 0L7.500 5.500H0z" fill="#666"/></svg>
<div class="abs" style="left:1069px;top:253px;width:7px;height:36px;border-radius:3.500px;background:#646464"></div>
<svg style="left:1069px;top:650.200px" width="7.500" height="5.500" viewBox="0 0 7.500 5.500"><path d="M0 0H7.500L3.750 5.500z" fill="#666"/></svg>

<!-- ================= STATUS BAR ================= -->
<div id="status" class="abs"></div>
<div class="t" style="left:10px;top:665px;font-size:10.4px;color:#222">第 2 页，共 8 页</div>
<div class="t" style="left:101px;top:665px;font-size:10.4px;color:#222">1480 个字</div>

<!-- focus -->
<svg style="left:775px;top:664px" width="13" height="12" viewBox="0 0 13 12" fill="none" stroke="#333" stroke-width="1" stroke-linejoin="round">
  <path d="M2.500 0.500h-2v2.500M10.500 0.500h2v2.500M2.500 11.500h-2v-2.500M10.500 11.500h2v-2.500"/>
  <path d="M3.500 2.500h3.700l2.300 2.300v4.700h-6zM7 2.700v2.300h2.300"/>
</svg>
<div class="t" style="left:790.500px;top:664.500px;font-size:10.2px;color:#222">专注</div>
<!-- read mode -->
<svg style="left:831px;top:664px" width="11" height="11" viewBox="0 0 11 11" fill="none" stroke="#333" stroke-width="1" shape-rendering="crispEdges">
  <path d="M0.500 0.500h4.500v9.500h-4.500zM5 0.500h5v9.500h-5z"/>
  <path d="M2 3h2M2 5h2M2 7h2M7 3h2M7 5h2M7 7h2" stroke="#555"/>
</svg>
<!-- print layout (selected) -->
<div class="abs" style="left:854px;top:661px;width:34px;height:18px;background:#dddddd"></div>
<svg style="left:866px;top:664px" width="10" height="12" viewBox="0 0 10 12" fill="none" stroke="#333" stroke-width="1" shape-rendering="crispEdges">
  <rect x="0.500" y="0.500" width="9" height="11" fill="#f4f4f4"/>
  <path d="M2 3.500h6M2 5.500h6M2 7.500h6M2 9.500h6" stroke="#444"/>
</svg>

<!-- ================= IME BAR ================= -->
<div class="abs" style="left:906px;top:657px;width:176px;height:22px;background:#fff;border:1px solid #c9d6e6;border-radius:3px"></div>
<!-- sogou logo -->
<svg style="left:885px;top:651px" width="31" height="28" viewBox="0 0 31 28">
  <rect x="-11.300" y="-11.300" width="22.600" height="26" rx="2.200" fill="#f2581f" transform="translate(15.300 15.600) rotate(-17)"/>
  <text x="0" y="0" font-family="Liberation Sans, sans-serif" font-weight="bold" font-size="21" fill="#fff" text-anchor="middle" transform="translate(15.800 22.600) rotate(-15) skewX(-12) scale(1.420 1)">S</text>
</svg>
<div class="t" style="left:919px;top:661.500px;font-size:13px;font-weight:700;color:#1d6fe3">中</div>
<!-- punctuation -->
<svg style="left:941px;top:663px" width="12" height="11" viewBox="0 0 12 11"><circle cx="2.200" cy="2.600" r="1.400" fill="none" stroke="#1d6fe3" stroke-width="1.200"/><path d="M7.200 5.500h2.600v2.200l-1.500 2.800h-1.300l1-2.800h-0.800z" fill="#1d6fe3"/></svg>
<!-- mic -->
<svg style="left:960px;top:661px" width="12" height="14" viewBox="0 0 12 14" fill="none" stroke="#1d6fe3"><rect x="3.800" y="0.300" width="4.400" height="8" rx="2.200" fill="#1d6fe3" stroke="none"/><path d="M1.600 6.200a4.400 4.400 0 0 0 8.800 0" stroke-width="1.200"/><path d="M6 10.600v1.800M3.800 13h4.400" stroke-width="1.200"/></svg>
<!-- keyboard -->
<svg style="left:981px;top:663px" width="13" height="10" viewBox="0 0 13 10"><rect x="0.600" y="0.600" width="11.800" height="8.800" rx="1.300" fill="#fff" stroke="#1d6fe3" stroke-width="1.200"/><path d="M2.500 3h1.300M5 3h1.300M7.400 3h1.300M9.700 3h1M2.500 5h1.300M5 5h1.300M7.400 5h1.300M9.700 5h1M3 7.200h7" stroke="#1d6fe3" stroke-width="1.200" fill="none"/></svg>
<!-- shirt -->
<svg style="left:1000px;top:659px" width="18" height="16" viewBox="0 0 18 16">
  <linearGradient id="sg" x1="0" y1="0" x2="0.600" y2="1"><stop offset="0" stop-color="#ff5a2c"/><stop offset="0.550" stop-color="#b05cf0"/><stop offset="1" stop-color="#4aa8ff"/></linearGradient>
  <path d="M4.200 4l-3.500 2l1.400 2.600l1.500-.7v6.600h7v-6.600l1.500.7l1.400-2.600l-3.500-2c-.6 1.200-1.500 1.700-2.900 1.700s-2.300-.5-2.900-1.700z" fill="url(#sg)"/>
  <circle cx="14.300" cy="2.600" r="2.500" fill="#ff4a2a"/>
</svg>
<!-- gamepad -->
<svg style="left:1022px;top:662px" width="14" height="12" viewBox="0 0 14 12"><path d="M4 0.800h6c2.300 0 3.500 2 3.700 5l0.200 3.500c0 1.500-1.700 2-2.600.8l-1.300-1.800h-6l-1.300 1.800c-.9 1.200-2.600.7-2.600-.8l.2-3.500c.2-3 1.400-5 3.700-5z" fill="#1d6fe3"/><path d="M3.200 4.600h2.600M4.500 3.300v2.600" stroke="#fff" stroke-width="1"/><circle cx="9.800" cy="4.600" r="1" fill="#fff"/></svg>
<!-- grid -->
<svg style="left:1043.500px;top:663px" width="11" height="11" viewBox="0 0 11 11" fill="#1d6fe3"><rect x="0" y="0" width="4.600" height="4.600" rx="1"/><rect x="6" y="0.300" width="4.400" height="4" rx="1" fill="none" stroke="#1d6fe3" stroke-width="1.200"/><rect x="0" y="6" width="4.600" height="4.600" rx="1"/><rect x="5.800" y="6" width="4.600" height="4.600" rx="1"/></svg>
<!-- settings -->
<svg style="left:1063.500px;top:661.500px" width="13" height="13" viewBox="0 0 13 13"><path d="M6.500 0.300l2 3.100h3.600l-1.800 3.100l1.800 3.100h-3.600l-2 3.100l-2-3.100h-3.600l1.800-3.100l-1.800-3.100h3.600z" fill="#1d6fe3"/><circle cx="6.500" cy="5.800" r="2.100" fill="#fff"/><path d="M6.500 5v5" stroke="#1d6fe3" stroke-width="1"/></svg>

</div>
</body>
</html>
